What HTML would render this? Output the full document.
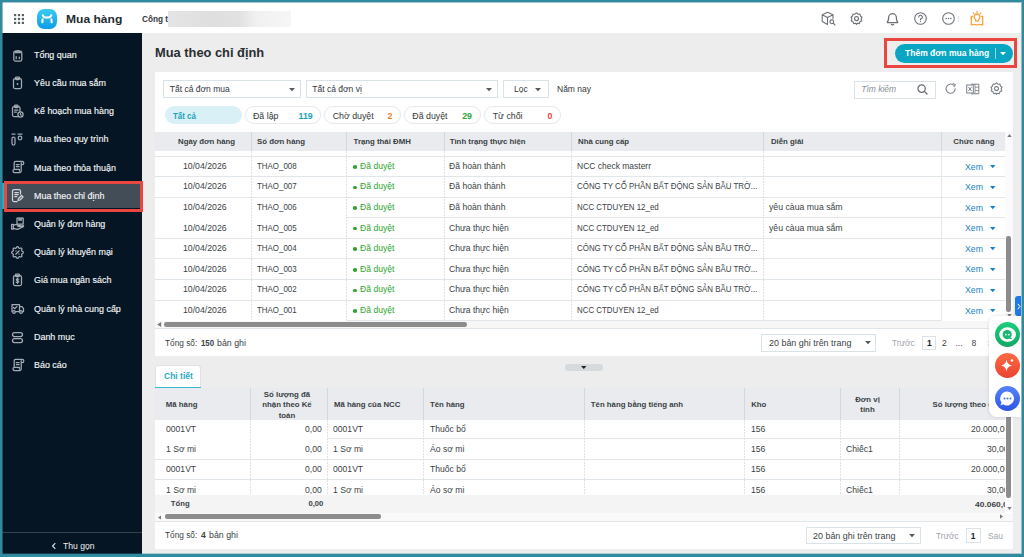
<!DOCTYPE html>
<html><head><meta charset="utf-8">
<style>
*{box-sizing:border-box;margin:0;padding:0}
html,body{width:1024px;height:557px;overflow:hidden}
body{background:#328a9f;font-family:"Liberation Sans",sans-serif;position:relative}
.a{position:absolute}
.t{position:absolute;white-space:nowrap;line-height:1;transform-origin:0 0}
svg{position:absolute;overflow:visible}
</style></head><body>
<div class="a" style="left:2px;top:2px;width:1019px;height:552px;background:#ededed"></div>
<div class="a" style="left:2px;top:2px;width:1019px;height:31px;background:#fff"></div>
<svg style="left:13px;top:13px" width="12" height="12" viewBox="0 0 12 12" fill="#5a5f66">
<rect x="1" y="1" width="2.2" height="2.2"/><rect x="4.9" y="1" width="2.2" height="2.2"/><rect x="8.8" y="1" width="2.2" height="2.2"/>
<rect x="1" y="4.9" width="2.2" height="2.2"/><rect x="4.9" y="4.9" width="2.2" height="2.2"/><rect x="8.8" y="4.9" width="2.2" height="2.2"/>
<rect x="1" y="8.8" width="2.2" height="2.2"/><rect x="4.9" y="8.8" width="2.2" height="2.2"/><rect x="8.8" y="8.8" width="2.2" height="2.2"/></svg>
<svg style="left:37px;top:9px" width="20" height="20" viewBox="0 0 20 20">
<defs><linearGradient id="lg" x1="0" y1="0" x2="0" y2="1"><stop offset="0" stop-color="#3ccbf6"/><stop offset="1" stop-color="#0b9ce6"/></linearGradient></defs>
<rect x="0" y="0" width="20" height="20" rx="7.2" fill="url(#lg)"/>
<path d="M5.8 6.3 C6.3 9.3 13.7 9.3 14.2 6.3" stroke="#fff" stroke-width="2.1" fill="none" stroke-linecap="round"/>
<path d="M5.6 10.4 L5.3 13.3 M14.4 10.4 L14.7 13.3" stroke="#fff" stroke-width="2.1" stroke-linecap="round"/></svg>
<div class="t" style="left:65.60px;top:14.06px;font-size:10.8px;color:#262a2f;font-weight:bold;transform:scaleX(1.1174);">Mua hàng</div>
<div class="t" style="left:142.30px;top:15.07px;font-size:8.9px;color:#33373c;font-weight:bold;transform:scaleX(0.9255);">Công t</div>
<div class="a" style="left:167.5px;top:11px;width:123.5px;height:16px;background:linear-gradient(90deg,#e4e4e4 0%,#dfdfdf 35%,#e1e1e1 58%,#f1f1f1 72%,#f6f6f6 100%)"></div>
<svg style="left:821px;top:11px" width="15" height="15" viewBox="0 0 15 15">
<path d="M6.5 1.2 L12 3.8 V7.5 M6.5 1.2 L1.2 3.8 V10.6 L6.5 13.4 M1.2 3.8 L6.5 6.4 L12 3.8 M6.5 6.4 V13.4" stroke="#6d7279" stroke-width="1.1" fill="none" stroke-linecap="round" stroke-linejoin="round"/>
<circle cx="10.8" cy="10.8" r="1.9" stroke="#6d7279" stroke-width="1.1" fill="none" stroke-linecap="round" stroke-linejoin="round"/><path d="M12.2 12.2 L14 14" stroke="#6d7279" stroke-width="1.1" fill="none" stroke-linecap="round" stroke-linejoin="round"/></svg>
<svg style="left:850px;top:12px" width="13" height="13" viewBox="0 0 13 13">
<path d="M6.5 .9 L8 2.2 L10 2 L10.4 4 L12 5.2 L11.1 7 L11.8 8.9 L10 9.6 L9.4 11.6 L7.4 11.2 L6.5 12.3 L5.6 11.2 L3.6 11.6 L3 9.6 L1.2 8.9 L1.9 7 L1 5.2 L2.6 4 L3 2 L5 2.2 Z" stroke="#6d7279" stroke-width="1.1" fill="none" stroke-linecap="round" stroke-linejoin="round"/>
<circle cx="6.5" cy="6.6" r="2" stroke="#6d7279" stroke-width="1.1" fill="none" stroke-linecap="round" stroke-linejoin="round"/></svg>
<svg style="left:885.5px;top:12px" width="13" height="14" viewBox="0 0 13 14">
<path d="M1.3 10.6 C1.3 9.2 2.6 8.8 2.6 6.6 V5.6 A3.9 3.9 0 0 1 10.4 5.6 V6.6 C10.4 8.8 11.7 9.2 11.7 10.6 Z" stroke="#6b7077" stroke-width="1.3" fill="none" stroke-linejoin="round"/><path d="M5.4 12.4 Q6.5 13.6 7.6 12.4" stroke="#6b7077" stroke-width="1.3" fill="none" stroke-linecap="round"/></svg>
<svg style="left:914px;top:12px" width="13" height="13" viewBox="0 0 13 13">
<circle cx="6.5" cy="6.5" r="5.8" stroke="#6d7279" stroke-width="1.1" fill="none" stroke-linecap="round" stroke-linejoin="round"/><path d="M4.8 5 A1.8 1.8 0 1 1 6.5 6.8 V7.8" stroke="#6d7279" stroke-width="1.1" fill="none" stroke-linecap="round" stroke-linejoin="round"/><circle cx="6.5" cy="9.6" r=".6" fill="#666b72"/></svg>
<svg style="left:942px;top:12px" width="13" height="13" viewBox="0 0 13 13">
<circle cx="6.5" cy="6.5" r="5.8" stroke="#6d7279" stroke-width="1.1" fill="none" stroke-linecap="round" stroke-linejoin="round"/><circle cx="4.2" cy="6.5" r=".75" fill="#666b72"/><circle cx="6.5" cy="6.5" r=".75" fill="#666b72"/><circle cx="8.8" cy="6.5" r=".75" fill="#666b72"/></svg>
<div class="a" style="left:958px;top:16px;width:1px;height:6px;background:#dfe3e6"></div>
<svg style="left:970px;top:10px" width="15" height="16" viewBox="0 0 15 16">
<path d="M2.6 6.4H1.3V15Q4.2 13.7 7 15Q9.8 13.7 12.7 15V6.4H11.4" stroke="#f8a43a" stroke-width="1.3" fill="none" stroke-linecap="round" stroke-linejoin="round"/>
<path d="M5.9 11.2L5.4 9.3A2.9 2.9 0 1 1 8.6 9.3L8.1 11.2Z" stroke="#f8a43a" stroke-width="1.3" fill="none" stroke-linecap="round" stroke-linejoin="round"/><path d="M7 1.3V2.3M3.3 3L3.9 3.6M10.7 3L10.1 3.6" stroke="#f8a43a" stroke-width="1.3" fill="none" stroke-linecap="round" stroke-linejoin="round"/></svg>
<div class="a" style="left:2px;top:33px;width:140px;height:521px;background:#051524"></div>
<div class="a" style="left:2px;top:183px;width:2px;height:26px;background:#1fb5d6"></div>
<div class="a" style="left:4px;top:181px;width:139px;height:31px;border:3px solid #e8463e;background:#051524;box-sizing:border-box"></div>
<div class="a" style="left:7px;top:184px;width:133px;height:24px;background:#434d57"></div>
<div class="a" style="left:2px;top:532px;width:140px;height:1px;background:#36414c"></div>
<svg style="left:51px;top:542px" width="6" height="8" viewBox="0 0 6 8"><path d="M4.3 1.2L1.6 4l2.7 2.8" stroke="#d5d9dd" stroke-width="1.2" fill="none"/></svg>
<div class="t" style="left:62.50px;top:541.71px;font-size:9.2px;color:#eef0f2;transform:scaleX(0.9344);">Thu gọn</div>
<svg style="left:11px;top:48px" width="13" height="15" viewBox="0 0 13 15"><rect x="2.8" y="3.2" width="8" height="9.8" rx="1.5" stroke="#a3abb3" stroke-width="1.25" fill="none" stroke-linecap="round" stroke-linejoin="round"/><path d="M5 3.5 Q6.8 1.8 8.6 3.5 L9.5 4.6 H4.1Z" stroke="#a3abb3" stroke-width="1.25" fill="none" stroke-linecap="round" stroke-linejoin="round"/><path d="M5.2 8.5v2.2M8.3 9v1.7" stroke="#a3abb3" stroke-width="1.25" fill="none" stroke-linecap="round" stroke-linejoin="round"/></svg>
<div class="t" style="left:34.10px;top:49.87px;font-size:9.6px;color:#f4f5f7;transform:scaleX(0.93);-webkit-text-stroke:0.15px #f4f5f7;">Tổng quan</div>
<svg style="left:11px;top:76px" width="13" height="15" viewBox="0 0 13 15"><rect x="2.5" y="2.5" width="8" height="10" rx="1.5" stroke="#a3abb3" stroke-width="1.25" fill="none" stroke-linecap="round" stroke-linejoin="round"/><rect x="4.5" y="1" width="4" height="2.5" rx="0.8" stroke="#a3abb3" stroke-width="1.25" fill="none" stroke-linecap="round" stroke-linejoin="round"/><circle cx="6.5" cy="8" r="0.9" fill="#a3abb3"/></svg>
<div class="t" style="left:34.10px;top:78.07px;font-size:9.6px;color:#f4f5f7;transform:scaleX(0.93);-webkit-text-stroke:0.15px #f4f5f7;">Yêu cầu mua sắm</div>
<svg style="left:11px;top:104px" width="13" height="15" viewBox="0 0 13 15"><rect x="1.5" y="2.5" width="7.5" height="10" rx="1.5" stroke="#a3abb3" stroke-width="1.25" fill="none" stroke-linecap="round" stroke-linejoin="round"/><rect x="3.5" y="1" width="3.5" height="2.5" rx="0.8" stroke="#a3abb3" stroke-width="1.25" fill="none" stroke-linecap="round" stroke-linejoin="round"/><path d="M3.5 6h3.5M3.5 8h2" stroke="#a3abb3" stroke-width="1.25" fill="none" stroke-linecap="round" stroke-linejoin="round"/><circle cx="9.5" cy="10.5" r="2.6" fill="#061421" stroke="#a3abb3" stroke-width="1.25" fill="none" stroke-linecap="round" stroke-linejoin="round"/><path d="M9.5 9.3v1.3l.8.6" stroke="#a3abb3" stroke-width="1.25" fill="none" stroke-linecap="round" stroke-linejoin="round"/></svg>
<div class="t" style="left:34.10px;top:106.27px;font-size:9.6px;color:#f4f5f7;transform:scaleX(0.93);-webkit-text-stroke:0.15px #f4f5f7;">Kế hoạch mua hàng</div>
<svg style="left:11px;top:132px" width="13" height="15" viewBox="0 0 13 15"><rect x="1" y="5" width="3" height="8" rx="1.5" stroke="#a3abb3" stroke-width="1.25" fill="none" stroke-linecap="round" stroke-linejoin="round"/><path d="M1 2h3M7 2h4" stroke="#a3abb3" stroke-width="1.25" fill="none" stroke-linecap="round" stroke-linejoin="round"/><circle cx="9" cy="6" r="1.8" stroke="#a3abb3" stroke-width="1.25" fill="none" stroke-linecap="round" stroke-linejoin="round"/></svg>
<div class="t" style="left:34.10px;top:134.47px;font-size:9.6px;color:#f4f5f7;transform:scaleX(0.93);-webkit-text-stroke:0.15px #f4f5f7;">Mua theo quy trình</div>
<svg style="left:11px;top:160px" width="13" height="15" viewBox="0 0 13 15"><path d="M4.6 1.3H11.2A1.6 1.6 0 0 1 11.2 4.5H10.2M4.6 1.3A1.4 1.4 0 0 0 3.2 2.7V9.4M10.2 2.7V11A1.5 1.5 0 0 1 8.7 12.5H3.6A1.6 1.6 0 0 1 3.6 9.3H8.4V11" stroke="#a3abb3" stroke-width="1.25" fill="none" stroke-linecap="round" stroke-linejoin="round"/><path d="M5.3 4.6H8.1M5.3 6.6H8.1" stroke="#a3abb3" stroke-width="1.25" fill="none" stroke-linecap="round" stroke-linejoin="round"/></svg>
<div class="t" style="left:34.10px;top:162.67px;font-size:9.6px;color:#f4f5f7;transform:scaleX(0.93);-webkit-text-stroke:0.15px #f4f5f7;">Mua theo thỏa thuận</div>
<svg style="left:11px;top:188px" width="13" height="15" viewBox="0 0 13 15"><path d="M9.5 6V3a1.5 1.5 0 0 0-1.5-1.5H3A1.5 1.5 0 0 0 1.5 3v9A1.5 1.5 0 0 0 3 13.5h3" stroke="#d3d7db" stroke-width="1.25" fill="none" stroke-linecap="round" stroke-linejoin="round"/><path d="M3.8 4.5h3.5M3.8 6.5h3.5M3.8 8.5h2" stroke="#d3d7db" stroke-width="1.25" fill="none" stroke-linecap="round" stroke-linejoin="round"/><path d="M7 12.5l.5-2 3-3 1.5 1.5-3 3z" stroke="#d3d7db" stroke-width="1.25" fill="none" stroke-linecap="round" stroke-linejoin="round"/></svg>
<div class="t" style="left:34.10px;top:190.87px;font-size:9.6px;color:#f4f5f7;transform:scaleX(0.93);-webkit-text-stroke:0.15px #f4f5f7;">Mua theo chỉ định</div>
<svg style="left:11px;top:217px" width="13" height="15" viewBox="0 0 13 15"><rect x="6" y="1.2" width="6.2" height="6" stroke="#a3abb3" stroke-width="1.25" fill="none" stroke-linecap="round" stroke-linejoin="round"/><path d="M8 1.2v2.2l1.1-.7 1.1.7V1.2" stroke="#a3abb3" stroke-width="1.25" fill="none" stroke-linecap="round" stroke-linejoin="round"/><rect x="0.6" y="7.4" width="1.8" height="4.6" stroke="#a3abb3" stroke-width="1.25" fill="none" stroke-linecap="round" stroke-linejoin="round"/><path d="M2.4 8.2L4.6 7.6Q6 7.4 7.4 8.4H9.2Q10.2 8.6 9.6 9.4H6.8M2.4 11.4L6.4 12.4L12.4 9.6Q13 8.6 12 8.6L9.6 9.4" stroke="#a3abb3" stroke-width="1.25" fill="none" stroke-linecap="round" stroke-linejoin="round"/></svg>
<div class="t" style="left:34.10px;top:219.07px;font-size:9.6px;color:#f4f5f7;transform:scaleX(0.93);-webkit-text-stroke:0.15px #f4f5f7;">Quản lý đơn hàng</div>
<svg style="left:11px;top:245px" width="13" height="15" viewBox="0 0 13 15"><path d="M12.35 7.50 L12.31 7.73 L12.21 7.95 L12.04 8.16 L11.83 8.34 L11.60 8.51 L11.36 8.67 L11.14 8.81 L10.95 8.94 L10.80 9.09 L10.70 9.24 L10.66 9.42 L10.66 9.62 L10.70 9.85 L10.76 10.11 L10.82 10.39 L10.87 10.67 L10.88 10.96 L10.85 11.22 L10.77 11.45 L10.64 11.64 L10.45 11.77 L10.22 11.85 L9.96 11.88 L9.67 11.87 L9.39 11.82 L9.11 11.76 L8.85 11.70 L8.62 11.66 L8.42 11.66 L8.24 11.70 L8.09 11.80 L7.94 11.95 L7.81 12.14 L7.67 12.36 L7.51 12.60 L7.34 12.83 L7.16 13.04 L6.95 13.21 L6.73 13.31 L6.50 13.35 L6.27 13.31 L6.05 13.21 L5.84 13.04 L5.66 12.83 L5.49 12.60 L5.33 12.36 L5.19 12.14 L5.06 11.95 L4.91 11.80 L4.76 11.70 L4.58 11.66 L4.38 11.66 L4.15 11.70 L3.89 11.76 L3.61 11.82 L3.33 11.87 L3.04 11.88 L2.78 11.85 L2.55 11.77 L2.36 11.64 L2.23 11.45 L2.15 11.22 L2.12 10.96 L2.13 10.67 L2.18 10.39 L2.24 10.11 L2.30 9.85 L2.34 9.62 L2.34 9.42 L2.30 9.24 L2.20 9.09 L2.05 8.94 L1.86 8.81 L1.64 8.67 L1.40 8.51 L1.17 8.34 L0.96 8.16 L0.79 7.95 L0.69 7.73 L0.65 7.50 L0.69 7.27 L0.79 7.05 L0.96 6.84 L1.17 6.66 L1.40 6.49 L1.64 6.33 L1.86 6.19 L2.05 6.06 L2.20 5.91 L2.30 5.76 L2.34 5.58 L2.34 5.38 L2.30 5.15 L2.24 4.89 L2.18 4.61 L2.13 4.33 L2.12 4.04 L2.15 3.78 L2.23 3.55 L2.36 3.36 L2.55 3.23 L2.78 3.15 L3.04 3.12 L3.33 3.13 L3.61 3.18 L3.89 3.24 L4.15 3.30 L4.38 3.34 L4.58 3.34 L4.76 3.30 L4.91 3.20 L5.06 3.05 L5.19 2.86 L5.33 2.64 L5.49 2.40 L5.66 2.17 L5.84 1.96 L6.05 1.79 L6.27 1.69 L6.50 1.65 L6.73 1.69 L6.95 1.79 L7.16 1.96 L7.34 2.17 L7.51 2.40 L7.67 2.64 L7.81 2.86 L7.94 3.05 L8.09 3.20 L8.24 3.30 L8.42 3.34 L8.62 3.34 L8.85 3.30 L9.11 3.24 L9.39 3.18 L9.67 3.13 L9.96 3.12 L10.22 3.15 L10.45 3.23 L10.64 3.36 L10.77 3.55 L10.85 3.78 L10.88 4.04 L10.87 4.33 L10.82 4.61 L10.76 4.89 L10.70 5.15 L10.66 5.38 L10.66 5.58 L10.70 5.76 L10.80 5.91 L10.95 6.06 L11.14 6.19 L11.36 6.33 L11.60 6.49 L11.83 6.66 L12.04 6.84 L12.21 7.05 L12.31 7.27 L12.35 7.50Z" stroke="#a3abb3" stroke-width="1.25" fill="none" stroke-linecap="round" stroke-linejoin="round"/><path d="M4.8 9.2l3.4-3.4" stroke="#a3abb3" stroke-width="1.25" fill="none" stroke-linecap="round" stroke-linejoin="round"/><circle cx="5" cy="6" r=".7" fill="#a3abb3"/><circle cx="8" cy="9" r=".7" fill="#a3abb3"/></svg>
<div class="t" style="left:34.10px;top:247.27px;font-size:9.6px;color:#f4f5f7;transform:scaleX(0.93);-webkit-text-stroke:0.15px #f4f5f7;">Quản lý khuyến mại</div>
<svg style="left:11px;top:273px" width="13" height="15" viewBox="0 0 13 15"><rect x="2.5" y="2.5" width="8" height="10" rx="1.5" stroke="#a3abb3" stroke-width="1.25" fill="none" stroke-linecap="round" stroke-linejoin="round"/><rect x="4.5" y="1" width="4" height="2.5" rx="0.8" stroke="#a3abb3" stroke-width="1.25" fill="none" stroke-linecap="round" stroke-linejoin="round"/><path d="M7.7 6.2c-.3-.5-2.4-.7-2.4.5s2.5.7 2.5 1.9-2.1 1.1-2.6.5M6.5 5.2v5.2" stroke="#a3abb3" stroke-width="1.25" fill="none" stroke-linecap="round" stroke-linejoin="round" stroke-width="0.9"/></svg>
<div class="t" style="left:34.10px;top:275.47px;font-size:9.6px;color:#f4f5f7;transform:scaleX(0.93);-webkit-text-stroke:0.15px #f4f5f7;">Giá mua ngân sách</div>
<svg style="left:11px;top:301px" width="13" height="15" viewBox="0 0 13 15"><path d="M1 3.5h7.5v7H1zM8.5 5.5h2.5l1.5 2v3h-4" stroke="#a3abb3" stroke-width="1.25" fill="none" stroke-linecap="round" stroke-linejoin="round"/><circle cx="3" cy="11" r="1.3" fill="#061421" stroke="#a3abb3" stroke-width="1.25" fill="none" stroke-linecap="round" stroke-linejoin="round"/><circle cx="10" cy="11" r="1.3" fill="#061421" stroke="#a3abb3" stroke-width="1.25" fill="none" stroke-linecap="round" stroke-linejoin="round"/><path d="M2.5 6.5l1.2 1.2 2.3-2.3" stroke="#a3abb3" stroke-width="1.25" fill="none" stroke-linecap="round" stroke-linejoin="round"/></svg>
<div class="t" style="left:34.10px;top:303.67px;font-size:9.6px;color:#f4f5f7;transform:scaleX(0.93);-webkit-text-stroke:0.15px #f4f5f7;">Quản lý nhà cung cấp</div>
<svg style="left:11px;top:330px" width="13" height="15" viewBox="0 0 13 15"><rect x="1.5" y="2.5" width="10" height="4" rx="2" stroke="#a3abb3" stroke-width="1.25" fill="none" stroke-linecap="round" stroke-linejoin="round"/><rect x="1.5" y="8.5" width="10" height="4" rx="2" stroke="#a3abb3" stroke-width="1.25" fill="none" stroke-linecap="round" stroke-linejoin="round"/></svg>
<div class="t" style="left:34.10px;top:331.87px;font-size:9.6px;color:#f4f5f7;transform:scaleX(0.93);-webkit-text-stroke:0.15px #f4f5f7;">Danh mục</div>
<svg style="left:11px;top:358px" width="13" height="15" viewBox="0 0 13 15"><path d="M4.6 1.3H11.2A1.6 1.6 0 0 1 11.2 4.5H10.2M4.6 1.3A1.4 1.4 0 0 0 3.2 2.7V9.4M10.2 2.7V11A1.5 1.5 0 0 1 8.7 12.5H3.6A1.6 1.6 0 0 1 3.6 9.3H8.4V11" stroke="#a3abb3" stroke-width="1.25" fill="none" stroke-linecap="round" stroke-linejoin="round"/><path d="M5.3 4.6H8.1M5.3 6.6H8.1" stroke="#a3abb3" stroke-width="1.25" fill="none" stroke-linecap="round" stroke-linejoin="round"/></svg>
<div class="t" style="left:34.10px;top:360.07px;font-size:9.6px;color:#f4f5f7;transform:scaleX(0.93);-webkit-text-stroke:0.15px #f4f5f7;">Báo cáo</div>
<div class="t" style="left:155.10px;top:46.33px;font-size:13.2px;color:#2a2d31;font-weight:bold;transform:scaleX(0.9742);">Mua theo chỉ định</div>
<div class="a" style="left:884px;top:38px;width:133px;height:30px;border:3px solid #e8463e;box-sizing:border-box"></div>
<div class="a" style="left:895px;top:44px;width:118px;height:19px;background:#08a6c3;border-radius:9.5px"></div>
<div class="t" style="left:904.60px;top:48.37px;font-size:9.6px;color:#ffffff;font-weight:bold;transform:scaleX(0.8885);">Thêm đơn mua hàng</div>
<div class="a" style="left:994.5px;top:47.5px;width:1px;height:11px;background:#8fd6e3"></div>
<svg style="left:999.5px;top:52px" width="6" height="4" viewBox="0 0 6 4"><path d="M0 0H6L3 3.2Z" fill="#fff"/></svg>
<div class="a" style="left:155px;top:72px;width:858px;height:284px;background:#fff"></div>
<div class="a" style="left:163px;top:80px;width:138px;height:18px;border:1px solid #d9e2e6;background:#fff;box-sizing:border-box"></div>
<div class="t" style="left:169.80px;top:84.90px;font-size:8.5px;color:#33373c;">Tất cả đơn mua</div>
<svg style="left:288.5px;top:87.6px" width="6" height="4" viewBox="0 0 6 4"><path d="M0 0H6L3 3.3Z" fill="#555a60"/></svg>
<div class="a" style="left:305.5px;top:80px;width:192px;height:18px;border:1px solid #d9e2e6;background:#fff;box-sizing:border-box"></div>
<div class="t" style="left:312.30px;top:84.90px;font-size:8.5px;color:#33373c;">Tất cả đơn vị</div>
<svg style="left:485.5px;top:87.6px" width="6" height="4" viewBox="0 0 6 4"><path d="M0 0H6L3 3.3Z" fill="#555a60"/></svg>
<div class="a" style="left:503px;top:80px;width:46px;height:18px;border:1px solid #d9e2e6;background:#fff;box-sizing:border-box"></div>
<div class="t" style="left:509.80px;top:84.90px;font-size:8.5px;color:#33373c;"></div>
<svg style="left:534.5px;top:87.6px" width="6" height="4" viewBox="0 0 6 4"><path d="M0 0H6L3 3.3Z" fill="#555a60"/></svg>
<div class="t" style="left:514.00px;top:84.90px;font-size:8.5px;color:#33373c;">Lọc</div>
<div class="t" style="left:557.00px;top:84.90px;font-size:8.5px;color:#33373c;">Năm nay</div>
<div class="a" style="left:854px;top:80.5px;width:82px;height:18px;border:1px solid #d9e2e6;background:#fff;box-sizing:border-box"></div>
<div class="t" style="left:861.20px;top:85.10px;font-size:8.5px;color:#8a8f96;font-style:italic;">Tìm kiếm</div>
<svg style="left:917px;top:84px" width="11" height="11" viewBox="0 0 11 11"><circle cx="4.6" cy="4.6" r="3.7" stroke="#666b72" stroke-width="1.2" fill="none"/><path d="M7.4 7.4L10 10" stroke="#666b72" stroke-width="1.3" stroke-linecap="round"/></svg>
<svg style="left:944.5px;top:82.5px" width="12" height="12" viewBox="0 0 12 12"><path d="M10.2 5.5 A4.6 4.6 0 1 1 8.6 2.2" stroke="#80858c" stroke-width="1.05" fill="none" stroke-linecap="round"/><path d="M8.3 .6 L10.4 1.6 L9 3.6" stroke="#80858c" stroke-width="1.05" fill="none" stroke-linecap="round" stroke-linejoin="round"/></svg>
<svg style="left:965.5px;top:82.5px" width="14" height="12" viewBox="0 0 14 12"><path d="M5 1.2 H12.8 V10.8 H5" stroke="#7b8087" stroke-width="1" fill="none"/><path d="M9 1.2V10.8M9 4.2H12.8M9 7.5H12.8" stroke="#7b8087" stroke-width=".8"/><rect x=".7" y="2" width="6.6" height="8" fill="#fff" stroke="#7b8087" stroke-width="1"/><path d="M2.4 4 L5.6 8 M5.6 4 L2.4 8" stroke="#7b8087" stroke-width="1"/></svg>
<svg style="left:989.5px;top:82px" width="13" height="13" viewBox="0 0 13 13">
<path d="M6.5 .9 L8 2.2 L10 2 L10.4 4 L12 5.2 L11.1 7 L11.8 8.9 L10 9.6 L9.4 11.6 L7.4 11.2 L6.5 12.3 L5.6 11.2 L3.6 11.6 L3 9.6 L1.2 8.9 L1.9 7 L1 5.2 L2.6 4 L3 2 L5 2.2 Z" stroke="#7b8087" stroke-width="1.1" fill="none" stroke-linejoin="round"/>
<circle cx="6.5" cy="6.6" r="2" stroke="#7b8087" stroke-width="1.1" fill="none"/></svg>
<div class="a" style="left:165.3px;top:105.8px;width:77px;height:18.3px;background:#d9f1f6;border-radius:9px"></div>
<div class="t" style="left:173.30px;top:111.65px;font-size:8.8px;color:#1c9fbd;font-weight:bold;transform:scaleX(0.9007);">Tất cả</div>
<div class="a" style="left:244.7px;top:105.8px;width:76.5px;height:18.3px;border:1px solid #e4e9ed;border-radius:9.2px;background:#fff;box-sizing:border-box"></div>
<div class="t" style="left:253.00px;top:111.65px;font-size:8.8px;color:#33373c;">Đã lập</div>
<div class="t" style="left:298.51px;top:111.65px;font-size:8.8px;color:#1c9fbd;font-weight:bold;">119</div>
<div class="a" style="left:324.4px;top:105.8px;width:76.5px;height:18.3px;border:1px solid #e4e9ed;border-radius:9.2px;background:#fff;box-sizing:border-box"></div>
<div class="t" style="left:332.70px;top:111.65px;font-size:8.8px;color:#33373c;">Chờ duyệt</div>
<div class="t" style="left:387.51px;top:111.65px;font-size:8.8px;color:#f0802a;font-weight:bold;">2</div>
<div class="a" style="left:404px;top:105.8px;width:76.5px;height:18.3px;border:1px solid #e4e9ed;border-radius:9.2px;background:#fff;box-sizing:border-box"></div>
<div class="t" style="left:412.30px;top:111.65px;font-size:8.8px;color:#33373c;">Đã duyệt</div>
<div class="t" style="left:462.22px;top:111.65px;font-size:8.8px;color:#33a532;font-weight:bold;">29</div>
<div class="a" style="left:484.4px;top:105.8px;width:76.5px;height:18.3px;border:1px solid #e4e9ed;border-radius:9.2px;background:#fff;box-sizing:border-box"></div>
<div class="t" style="left:492.70px;top:111.65px;font-size:8.8px;color:#33373c;">Từ chối</div>
<div class="t" style="left:547.51px;top:111.65px;font-size:8.8px;color:#e8453c;font-weight:bold;">0</div>
<div class="a" style="left:155px;top:131.5px;width:850px;height:19.2px;background:#e9ebee"></div>
<div class="a" style="left:250.5px;top:131.5px;width:1px;height:19.2px;background:#d3d8dd"></div>
<div class="a" style="left:346.3px;top:131.5px;width:1px;height:19.2px;background:#d3d8dd"></div>
<div class="a" style="left:443.5px;top:131.5px;width:1px;height:19.2px;background:#d3d8dd"></div>
<div class="a" style="left:571.1px;top:131.5px;width:1px;height:19.2px;background:#d3d8dd"></div>
<div class="a" style="left:763.2px;top:131.5px;width:1px;height:19.2px;background:#d3d8dd"></div>
<div class="a" style="left:941px;top:131.5px;width:1px;height:19.2px;background:#d3d8dd"></div>
<div class="t" style="left:178.00px;top:137.70px;font-size:7.8px;color:#3a3f45;font-weight:bold;">Ngày đơn hàng</div>
<div class="t" style="left:257.00px;top:137.70px;font-size:7.8px;color:#3a3f45;font-weight:bold;">Số đơn hàng</div>
<div class="t" style="left:353.60px;top:137.70px;font-size:7.8px;color:#3a3f45;font-weight:bold;">Trạng thái ĐMH</div>
<div class="t" style="left:449.70px;top:137.70px;font-size:7.8px;color:#3a3f45;font-weight:bold;">Tình trạng thực hiện</div>
<div class="t" style="left:578.00px;top:137.70px;font-size:7.8px;color:#3a3f45;font-weight:bold;">Nhà cung cấp</div>
<div class="t" style="left:770.90px;top:137.70px;font-size:7.8px;color:#3a3f45;font-weight:bold;">Diễn giải</div>
<div class="t" style="left:953.33px;top:137.70px;font-size:7.8px;color:#3a3f45;font-weight:bold;">Chức năng</div>
<div class="a" style="left:155px;top:155.6px;width:850px;height:1px;background:#e1e6ea"></div>
<div class="a" style="left:155px;top:176.2px;width:850px;height:1px;background:#e1e6ea"></div>
<div class="a" style="left:155px;top:196.6px;width:850px;height:1px;background:#e1e6ea"></div>
<div class="a" style="left:155px;top:238.3px;width:850px;height:1px;background:#e1e6ea"></div>
<div class="a" style="left:155px;top:258.3px;width:850px;height:1px;background:#e1e6ea"></div>
<div class="a" style="left:155px;top:279.2px;width:850px;height:1px;background:#e1e6ea"></div>
<div class="a" style="left:155px;top:300.2px;width:850px;height:1px;background:#e1e6ea"></div>
<div class="a" style="left:346px;top:320px;width:595px;height:1px;background:#e1e6ea"></div>
<div class="a" style="left:155px;top:327.8px;width:858px;height:1px;background:#e1e6ea"></div>
<div class="a" style="left:346px;top:217.4px;width:659px;height:1px;background:#e1e6ea"></div>
<div class="a" style="left:941px;top:151px;width:1px;height:170px;background:#e3e7ea"></div>
<div class="a" style="left:250.5px;top:151px;width:1px;height:169px;background:repeating-linear-gradient(180deg,#dfe3e7 0 2px,transparent 2px 3px)"></div>
<div class="a" style="left:346.3px;top:151px;width:1px;height:169px;background:repeating-linear-gradient(180deg,#dfe3e7 0 2px,transparent 2px 3px)"></div>
<div class="a" style="left:443.5px;top:151px;width:1px;height:169px;background:repeating-linear-gradient(180deg,#dfe3e7 0 2px,transparent 2px 3px)"></div>
<div class="a" style="left:571.1px;top:151px;width:1px;height:169px;background:repeating-linear-gradient(180deg,#dfe3e7 0 2px,transparent 2px 3px)"></div>
<div class="a" style="left:763.2px;top:151px;width:1px;height:169px;background:repeating-linear-gradient(180deg,#dfe3e7 0 2px,transparent 2px 3px)"></div>
<div class="t" style="left:183.30px;top:161.93px;font-size:9.3px;color:#3a3f45;transform:scaleX(0.9370);">10/04/2026</div>
<div class="t" style="left:256.70px;top:161.93px;font-size:9.3px;color:#3a3f45;transform:scaleX(0.8536);">THAO_008</div>
<div class="a" style="left:353px;top:165.20000000000002px;width:3.6px;height:3.6px;background:#2ea52e;border-radius:50%"></div>
<div class="t" style="left:360.40px;top:161.93px;font-size:9.3px;color:#2ea52e;transform:scaleX(0.9250);">Đã duyệt</div>
<div class="t" style="left:449.00px;top:161.93px;font-size:9.3px;color:#3a3f45;transform:scaleX(0.9250);">Đã hoàn thành</div>
<div class="t" style="left:576.80px;top:161.93px;font-size:9.3px;color:#3a3f45;transform:scaleX(0.9124);">NCC check masterr</div>
<div class="t" style="left:965.00px;top:162.73px;font-size:9.3px;color:#1b82c5;transform:scaleX(0.9416);">Xem</div>
<svg style="left:989.5px;top:165.2px" width="6" height="4" viewBox="0 0 6 4"><path d="M0 0H5.5L2.75 3.2Z" fill="#1b82c5"/></svg>
<div class="t" style="left:183.30px;top:182.48px;font-size:9.3px;color:#3a3f45;transform:scaleX(0.9370);">10/04/2026</div>
<div class="t" style="left:256.70px;top:182.48px;font-size:9.3px;color:#3a3f45;transform:scaleX(0.8536);">THAO_007</div>
<div class="a" style="left:353px;top:185.75000000000003px;width:3.6px;height:3.6px;background:#2ea52e;border-radius:50%"></div>
<div class="t" style="left:360.40px;top:182.48px;font-size:9.3px;color:#2ea52e;transform:scaleX(0.9250);">Đã duyệt</div>
<div class="t" style="left:449.00px;top:182.48px;font-size:9.3px;color:#3a3f45;transform:scaleX(0.9250);">Đã hoàn thành</div>
<div class="t" style="left:576.80px;top:182.48px;font-size:9.3px;color:#3a3f45;transform:scaleX(0.8517);">CÔNG TY CỔ PHẦN BẤT ĐỘNG SẢN BẦU TRỜ...</div>
<div class="t" style="left:965.00px;top:183.28px;font-size:9.3px;color:#1b82c5;transform:scaleX(0.9416);">Xem</div>
<svg style="left:989.5px;top:185.8px" width="6" height="4" viewBox="0 0 6 4"><path d="M0 0H5.5L2.75 3.2Z" fill="#1b82c5"/></svg>
<div class="t" style="left:183.30px;top:203.03px;font-size:9.3px;color:#3a3f45;transform:scaleX(0.9370);">10/04/2026</div>
<div class="t" style="left:256.70px;top:203.03px;font-size:9.3px;color:#3a3f45;transform:scaleX(0.8536);">THAO_006</div>
<div class="a" style="left:353px;top:206.3px;width:3.6px;height:3.6px;background:#2ea52e;border-radius:50%"></div>
<div class="t" style="left:360.40px;top:203.03px;font-size:9.3px;color:#2ea52e;transform:scaleX(0.9250);">Đã duyệt</div>
<div class="t" style="left:449.00px;top:203.03px;font-size:9.3px;color:#3a3f45;transform:scaleX(0.9250);">Đã hoàn thành</div>
<div class="t" style="left:576.80px;top:203.03px;font-size:9.3px;color:#3a3f45;transform:scaleX(0.8502);">NCC CTDUYEN 12_ed</div>
<div class="t" style="left:768.70px;top:203.03px;font-size:9.3px;color:#3a3f45;transform:scaleX(0.9370);">yêu càua mua sắm</div>
<div class="t" style="left:965.00px;top:203.83px;font-size:9.3px;color:#1b82c5;transform:scaleX(0.9416);">Xem</div>
<svg style="left:989.5px;top:206.3px" width="6" height="4" viewBox="0 0 6 4"><path d="M0 0H5.5L2.75 3.2Z" fill="#1b82c5"/></svg>
<div class="t" style="left:183.30px;top:223.58px;font-size:9.3px;color:#3a3f45;transform:scaleX(0.9370);">10/04/2026</div>
<div class="t" style="left:256.70px;top:223.58px;font-size:9.3px;color:#3a3f45;transform:scaleX(0.8536);">THAO_005</div>
<div class="a" style="left:353px;top:226.85000000000002px;width:3.6px;height:3.6px;background:#2ea52e;border-radius:50%"></div>
<div class="t" style="left:360.40px;top:223.58px;font-size:9.3px;color:#2ea52e;transform:scaleX(0.9250);">Đã duyệt</div>
<div class="t" style="left:449.00px;top:223.58px;font-size:9.3px;color:#3a3f45;transform:scaleX(0.9250);">Chưa thực hiện</div>
<div class="t" style="left:576.80px;top:223.58px;font-size:9.3px;color:#3a3f45;transform:scaleX(0.8502);">NCC CTDUYEN 12_ed</div>
<div class="t" style="left:768.70px;top:223.58px;font-size:9.3px;color:#3a3f45;transform:scaleX(0.9370);">yêu càua mua sắm</div>
<div class="t" style="left:965.00px;top:224.38px;font-size:9.3px;color:#1b82c5;transform:scaleX(0.9416);">Xem</div>
<svg style="left:989.5px;top:226.9px" width="6" height="4" viewBox="0 0 6 4"><path d="M0 0H5.5L2.75 3.2Z" fill="#1b82c5"/></svg>
<div class="t" style="left:183.30px;top:244.13px;font-size:9.3px;color:#3a3f45;transform:scaleX(0.9370);">10/04/2026</div>
<div class="t" style="left:256.70px;top:244.13px;font-size:9.3px;color:#3a3f45;transform:scaleX(0.8536);">THAO_004</div>
<div class="a" style="left:353px;top:247.4px;width:3.6px;height:3.6px;background:#2ea52e;border-radius:50%"></div>
<div class="t" style="left:360.40px;top:244.13px;font-size:9.3px;color:#2ea52e;transform:scaleX(0.9250);">Đã duyệt</div>
<div class="t" style="left:449.00px;top:244.13px;font-size:9.3px;color:#3a3f45;transform:scaleX(0.9250);">Chưa thực hiện</div>
<div class="t" style="left:576.80px;top:244.13px;font-size:9.3px;color:#3a3f45;transform:scaleX(0.8517);">CÔNG TY CỔ PHẦN BẤT ĐỘNG SẢN BẦU TRỜ...</div>
<div class="t" style="left:965.00px;top:244.93px;font-size:9.3px;color:#1b82c5;transform:scaleX(0.9416);">Xem</div>
<svg style="left:989.5px;top:247.4px" width="6" height="4" viewBox="0 0 6 4"><path d="M0 0H5.5L2.75 3.2Z" fill="#1b82c5"/></svg>
<div class="t" style="left:183.30px;top:264.68px;font-size:9.3px;color:#3a3f45;transform:scaleX(0.9370);">10/04/2026</div>
<div class="t" style="left:256.70px;top:264.68px;font-size:9.3px;color:#3a3f45;transform:scaleX(0.8536);">THAO_003</div>
<div class="a" style="left:353px;top:267.95px;width:3.6px;height:3.6px;background:#2ea52e;border-radius:50%"></div>
<div class="t" style="left:360.40px;top:264.68px;font-size:9.3px;color:#2ea52e;transform:scaleX(0.9250);">Đã duyệt</div>
<div class="t" style="left:449.00px;top:264.68px;font-size:9.3px;color:#3a3f45;transform:scaleX(0.9250);">Chưa thực hiện</div>
<div class="t" style="left:576.80px;top:264.68px;font-size:9.3px;color:#3a3f45;transform:scaleX(0.8517);">CÔNG TY CỔ PHẦN BẤT ĐỘNG SẢN BẦU TRỜ...</div>
<div class="t" style="left:965.00px;top:265.48px;font-size:9.3px;color:#1b82c5;transform:scaleX(0.9416);">Xem</div>
<svg style="left:989.5px;top:267.9px" width="6" height="4" viewBox="0 0 6 4"><path d="M0 0H5.5L2.75 3.2Z" fill="#1b82c5"/></svg>
<div class="t" style="left:183.30px;top:285.23px;font-size:9.3px;color:#3a3f45;transform:scaleX(0.9370);">10/04/2026</div>
<div class="t" style="left:256.70px;top:285.23px;font-size:9.3px;color:#3a3f45;transform:scaleX(0.8536);">THAO_002</div>
<div class="a" style="left:353px;top:288.5px;width:3.6px;height:3.6px;background:#2ea52e;border-radius:50%"></div>
<div class="t" style="left:360.40px;top:285.23px;font-size:9.3px;color:#2ea52e;transform:scaleX(0.9250);">Đã duyệt</div>
<div class="t" style="left:449.00px;top:285.23px;font-size:9.3px;color:#3a3f45;transform:scaleX(0.9250);">Chưa thực hiện</div>
<div class="t" style="left:576.80px;top:285.23px;font-size:9.3px;color:#3a3f45;transform:scaleX(0.8517);">CÔNG TY CỔ PHẦN BẤT ĐỘNG SẢN BẦU TRỜ...</div>
<div class="t" style="left:965.00px;top:286.03px;font-size:9.3px;color:#1b82c5;transform:scaleX(0.9416);">Xem</div>
<svg style="left:989.5px;top:288.5px" width="6" height="4" viewBox="0 0 6 4"><path d="M0 0H5.5L2.75 3.2Z" fill="#1b82c5"/></svg>
<div class="t" style="left:183.30px;top:305.78px;font-size:9.3px;color:#3a3f45;transform:scaleX(0.9370);">10/04/2026</div>
<div class="t" style="left:256.70px;top:305.78px;font-size:9.3px;color:#3a3f45;transform:scaleX(0.8536);">THAO_001</div>
<div class="a" style="left:353px;top:309.04999999999995px;width:3.6px;height:3.6px;background:#2ea52e;border-radius:50%"></div>
<div class="t" style="left:360.40px;top:305.78px;font-size:9.3px;color:#2ea52e;transform:scaleX(0.9250);">Đã duyệt</div>
<div class="t" style="left:449.00px;top:305.78px;font-size:9.3px;color:#3a3f45;transform:scaleX(0.9250);">Chưa thực hiện</div>
<div class="t" style="left:576.80px;top:305.78px;font-size:9.3px;color:#3a3f45;transform:scaleX(0.8502);">NCC CTDUYEN 12_ed</div>
<div class="t" style="left:965.00px;top:306.58px;font-size:9.3px;color:#1b82c5;transform:scaleX(0.9416);">Xem</div>
<svg style="left:989.5px;top:309.0px" width="6" height="4" viewBox="0 0 6 4"><path d="M0 0H5.5L2.75 3.2Z" fill="#1b82c5"/></svg>
<div class="a" style="left:155px;top:321px;width:850px;height:6.8px;background:#f7f7f7"></div>
<svg style="left:156.8px;top:321.8px" width="5" height="5" viewBox="0 0 5 5"><path d="M4.2 0V5L0.2 2.5Z" fill="#777"/></svg>
<div class="a" style="left:164.4px;top:322px;width:302.6px;height:4.6px;background:#8c8c8c;border-radius:2.3px"></div>
<div class="a" style="left:1005px;top:131px;width:8px;height:190px;background:#fafafa"></div>
<svg style="left:1006.5px;top:133px" width="5" height="5" viewBox="0 0 5 5"><path d="M0.3 4H4.7L2.5 1Z" fill="#7a7a7a"/></svg>
<div class="a" style="left:1006.3px;top:236px;width:4.4px;height:75.6px;background:#8c8c8c;border-radius:2.2px"></div>
<svg style="left:1006.5px;top:313px" width="5" height="5" viewBox="0 0 5 5"><path d="M0.3 1H4.7L2.5 4Z" fill="#7a7a7a"/></svg>
<div class="t" style="left:165.40px;top:338.60px;font-size:8.5px;color:#3a3f45;transform:scaleX(0.9736);">Tổng số:</div>
<div class="t" style="left:200.80px;top:338.60px;font-size:8.5px;color:#3a3f45;font-weight:bold;transform:scaleX(0.9237);">150</div>
<div class="t" style="left:217.10px;top:338.60px;font-size:8.5px;color:#3a3f45;transform:scaleX(1.0399);">bản ghi</div>
<div class="a" style="left:761.4px;top:334.4px;width:115px;height:17.2px;border:1px solid #d9e2e6;background:#fff;box-sizing:border-box"></div>
<div class="t" style="left:768.60px;top:339.10px;font-size:8.5px;color:#3a3f45;transform:scaleX(1.0504);">20 bản ghi trên trang</div>
<svg style="left:864.5px;top:341px" width="6" height="4" viewBox="0 0 6 4"><path d="M0 0H6L3 3.3Z" fill="#555a60"/></svg>
<div class="t" style="left:892.00px;top:339.10px;font-size:8.5px;color:#a0a5ab;transform:scaleX(0.9775);">Trước</div>
<div class="a" style="left:922.2px;top:335.8px;width:14.1px;height:14.7px;border:1px solid #d9e2e6;background:#fff;box-sizing:border-box"></div>
<div class="t" style="left:926.89px;top:339.10px;font-size:8.5px;color:#222;font-weight:bold;">1</div>
<div class="t" style="left:942.00px;top:339.10px;font-size:8.5px;color:#3a3f45;">2</div>
<div class="t" style="left:955.50px;top:339.10px;font-size:8.5px;color:#3a3f45;">...</div>
<div class="t" style="left:971.50px;top:339.10px;font-size:8.5px;color:#3a3f45;">8</div>
<div class="t" style="left:988.00px;top:339.10px;font-size:8.5px;color:#a0a5ab;">Sau</div>
<div class="a" style="left:564.5px;top:363.6px;width:38.5px;height:7.7px;background:#d6dadd;border-radius:3px"></div>
<svg style="left:580.5px;top:366px" width="6" height="4" viewBox="0 0 6 4"><path d="M0 0H5.5L2.75 3Z" fill="#222"/></svg>
<div class="a" style="left:155px;top:364.8px;width:45.6px;height:23px;background:#fff;border:1px solid #dde2e5;border-bottom:none;border-radius:3px 3px 0 0;box-sizing:border-box"></div>
<div class="a" style="left:155px;top:386.6px;width:45.6px;height:1.4px;background:#3ab6d2"></div>
<div class="t" style="left:163.60px;top:371.65px;font-size:8.8px;color:#2aaac8;font-weight:bold;transform:scaleX(0.9695);">Chi tiết</div>
<div class="a" style="left:155px;top:388px;width:858px;height:161.3px;background:#fff"></div>
<div class="a" style="left:155px;top:388px;width:850px;height:31.5px;background:#e9ebee"></div>
<div class="a" style="left:250.2px;top:388px;width:1px;height:31.5px;background:#d3d8dd"></div>
<div class="a" style="left:327.2px;top:388px;width:1px;height:31.5px;background:#d3d8dd"></div>
<div class="a" style="left:423.3px;top:388px;width:1px;height:31.5px;background:#d3d8dd"></div>
<div class="a" style="left:584px;top:388px;width:1px;height:31.5px;background:#d3d8dd"></div>
<div class="a" style="left:744.4px;top:388px;width:1px;height:31.5px;background:#d3d8dd"></div>
<div class="a" style="left:840.3px;top:388px;width:1px;height:31.5px;background:#d3d8dd"></div>
<div class="a" style="left:898.5px;top:388px;width:1px;height:31.5px;background:#d3d8dd"></div>
<div class="t" style="left:165.80px;top:401.40px;font-size:7.8px;color:#3a3f45;font-weight:bold;">Mã hàng</div>
<div class="t" style="left:263.86px;top:391.00px;font-size:7.8px;color:#3a3f45;font-weight:bold;">Số lượng đã</div>
<div class="t" style="left:262.31px;top:401.40px;font-size:7.8px;color:#3a3f45;font-weight:bold;">nhận theo Kế</div>
<div class="t" style="left:278.77px;top:411.70px;font-size:7.8px;color:#3a3f45;font-weight:bold;">toán</div>
<div class="t" style="left:334.00px;top:401.40px;font-size:7.8px;color:#3a3f45;font-weight:bold;">Mã hàng của NCC</div>
<div class="t" style="left:429.90px;top:401.40px;font-size:7.8px;color:#3a3f45;font-weight:bold;">Tên hàng</div>
<div class="t" style="left:590.80px;top:401.40px;font-size:7.8px;color:#3a3f45;font-weight:bold;">Tên hàng bằng tiếng anh</div>
<div class="t" style="left:751.20px;top:401.40px;font-size:7.8px;color:#3a3f45;font-weight:bold;">Kho</div>
<div class="t" style="left:855.20px;top:395.90px;font-size:7.8px;color:#3a3f45;font-weight:bold;">Đơn vị</div>
<div class="t" style="left:860.36px;top:405.90px;font-size:7.8px;color:#3a3f45;font-weight:bold;">tính</div>
<div class="t" style="left:932.50px;top:401.40px;font-size:7.8px;color:#3a3f45;font-weight:bold;">Số lượng theo đ</div>
<div class="a" style="left:327px;top:438.4px;width:678px;height:1px;background:#e1e6ea"></div>
<div class="a" style="left:155px;top:458.8px;width:850px;height:1px;background:#e1e6ea"></div>
<div class="a" style="left:155px;top:479.2px;width:850px;height:1px;background:#e1e6ea"></div>
<div class="a" style="left:250.2px;top:419.5px;width:1px;height:76px;background:repeating-linear-gradient(180deg,#dfe3e7 0 2px,transparent 2px 3px)"></div>
<div class="a" style="left:327.2px;top:419.5px;width:1px;height:76px;background:repeating-linear-gradient(180deg,#dfe3e7 0 2px,transparent 2px 3px)"></div>
<div class="a" style="left:423.3px;top:419.5px;width:1px;height:76px;background:repeating-linear-gradient(180deg,#dfe3e7 0 2px,transparent 2px 3px)"></div>
<div class="a" style="left:584px;top:419.5px;width:1px;height:76px;background:repeating-linear-gradient(180deg,#dfe3e7 0 2px,transparent 2px 3px)"></div>
<div class="a" style="left:744.4px;top:419.5px;width:1px;height:76px;background:repeating-linear-gradient(180deg,#dfe3e7 0 2px,transparent 2px 3px)"></div>
<div class="a" style="left:840.3px;top:419.5px;width:1px;height:76px;background:repeating-linear-gradient(180deg,#dfe3e7 0 2px,transparent 2px 3px)"></div>
<div class="a" style="left:898.5px;top:419.5px;width:1px;height:76px;background:repeating-linear-gradient(180deg,#dfe3e7 0 2px,transparent 2px 3px)"></div>
<div class="a" style="left:0;top:0;width:1005px;height:557px;overflow:hidden">
<div class="t" style="left:165.50px;top:424.63px;font-size:9.3px;color:#3a3f45;transform:scaleX(0.9250);">0001VT</div>
<div class="t" style="left:304.86px;top:424.63px;font-size:9.3px;color:#3a3f45;transform:scaleX(0.9250);">0,00</div>
<div class="t" style="left:333.20px;top:424.63px;font-size:9.3px;color:#3a3f45;transform:scaleX(0.9250);">0001VT</div>
<div class="t" style="left:429.90px;top:424.63px;font-size:9.3px;color:#3a3f45;transform:scaleX(0.9250);">Thuốc bổ</div>
<div class="t" style="left:751.20px;top:424.63px;font-size:9.3px;color:#3a3f45;transform:scaleX(0.9250);">156</div>
<div class="t" style="left:970.74px;top:424.63px;font-size:9.3px;color:#3a3f45;transform:scaleX(0.9250);">20.000,00</div>
<div class="t" style="left:165.50px;top:444.93px;font-size:9.3px;color:#3a3f45;transform:scaleX(0.9250);">1 Sơ mi</div>
<div class="t" style="left:304.86px;top:444.93px;font-size:9.3px;color:#3a3f45;transform:scaleX(0.9250);">0,00</div>
<div class="t" style="left:333.20px;top:444.93px;font-size:9.3px;color:#3a3f45;transform:scaleX(0.9250);">1 Sơ mi</div>
<div class="t" style="left:429.90px;top:444.93px;font-size:9.3px;color:#3a3f45;transform:scaleX(0.9250);">Áo sơ mi</div>
<div class="t" style="left:751.20px;top:444.93px;font-size:9.3px;color:#3a3f45;transform:scaleX(0.9250);">156</div>
<div class="t" style="left:846.40px;top:444.93px;font-size:9.3px;color:#3a3f45;transform:scaleX(0.9250);">Chiếc1</div>
<div class="t" style="left:987.48px;top:444.93px;font-size:9.3px;color:#3a3f45;transform:scaleX(0.9250);">30,00</div>
<div class="t" style="left:165.50px;top:465.23px;font-size:9.3px;color:#3a3f45;transform:scaleX(0.9250);">0001VT</div>
<div class="t" style="left:304.86px;top:465.23px;font-size:9.3px;color:#3a3f45;transform:scaleX(0.9250);">0,00</div>
<div class="t" style="left:333.20px;top:465.23px;font-size:9.3px;color:#3a3f45;transform:scaleX(0.9250);">0001VT</div>
<div class="t" style="left:429.90px;top:465.23px;font-size:9.3px;color:#3a3f45;transform:scaleX(0.9250);">Thuốc bổ</div>
<div class="t" style="left:751.20px;top:465.23px;font-size:9.3px;color:#3a3f45;transform:scaleX(0.9250);">156</div>
<div class="t" style="left:970.74px;top:465.23px;font-size:9.3px;color:#3a3f45;transform:scaleX(0.9250);">20.000,00</div>
<div class="t" style="left:165.50px;top:485.53px;font-size:9.3px;color:#3a3f45;transform:scaleX(0.9250);">1 Sơ mi</div>
<div class="t" style="left:304.86px;top:485.53px;font-size:9.3px;color:#3a3f45;transform:scaleX(0.9250);">0,00</div>
<div class="t" style="left:333.20px;top:485.53px;font-size:9.3px;color:#3a3f45;transform:scaleX(0.9250);">1 Sơ mi</div>
<div class="t" style="left:429.90px;top:485.53px;font-size:9.3px;color:#3a3f45;transform:scaleX(0.9250);">Áo sơ mi</div>
<div class="t" style="left:751.20px;top:485.53px;font-size:9.3px;color:#3a3f45;transform:scaleX(0.9250);">156</div>
<div class="t" style="left:846.40px;top:485.53px;font-size:9.3px;color:#3a3f45;transform:scaleX(0.9250);">Chiếc1</div>
<div class="t" style="left:987.48px;top:485.53px;font-size:9.3px;color:#3a3f45;transform:scaleX(0.9250);">30,00</div>
<div class="a" style="left:155px;top:495.3px;width:850px;height:17.6px;background:#f4f4f4"></div>
<div class="t" style="left:170.80px;top:500.18px;font-size:7.7px;color:#3a3f45;font-weight:bold;">Tổng</div>
<div class="t" style="left:308.44px;top:500.18px;font-size:7.7px;color:#3a3f45;font-weight:bold;">0,00</div>
<div class="t" style="left:974.50px;top:500.68px;font-size:7.7px;color:#3a3f45;font-weight:bold;transform:scaleX(1.0965);">40.060,00</div>
</div>
<div class="a" style="left:155px;top:513px;width:850px;height:8px;background:#f9f9f9"></div>
<svg style="left:156.5px;top:514.5px" width="5" height="5" viewBox="0 0 5 5"><path d="M4 0.5V4.5L1 2.5Z" fill="#7a7a7a"/></svg>
<div class="a" style="left:164.7px;top:514.2px;width:216px;height:5px;background:#8c8c8c;border-radius:2.1px"></div>
<div class="a" style="left:155px;top:521px;width:858px;height:1px;background:#e1e6ea"></div>
<div class="a" style="left:1005px;top:513px;width:8px;height:8px;background:#f9f9f9"></div>
<div class="a" style="left:1006.3px;top:412px;width:4.4px;height:86px;background:#8c8c8c;border-radius:2.2px"></div>
<svg style="left:1006.5px;top:506px" width="5" height="5" viewBox="0 0 5 5"><path d="M0.3 1H4.7L2.5 4Z" fill="#7a7a7a"/></svg>
<svg style="left:999px;top:514px" width="5" height="5" viewBox="0 0 5 5"><path d="M1 0.3V4.7L4 2.5Z" fill="#7a7a7a"/></svg>
<div class="t" style="left:165.40px;top:531.40px;font-size:8.5px;color:#3a3f45;transform:scaleX(0.9736);">Tổng số:</div>
<div class="t" style="left:201.00px;top:531.40px;font-size:8.5px;color:#3a3f45;font-weight:bold;">4</div>
<div class="t" style="left:209.00px;top:531.40px;font-size:8.5px;color:#3a3f45;transform:scaleX(1.0399);">bản ghi</div>
<div class="a" style="left:805.5px;top:527px;width:115px;height:17px;border:1px solid #d9e2e6;background:#fff;box-sizing:border-box"></div>
<div class="t" style="left:812.70px;top:531.60px;font-size:8.5px;color:#3a3f45;transform:scaleX(1.0504);">20 bản ghi trên trang</div>
<svg style="left:908.5px;top:533.5px" width="6" height="4" viewBox="0 0 6 4"><path d="M0 0H6L3 3.3Z" fill="#555a60"/></svg>
<div class="t" style="left:936.00px;top:531.60px;font-size:8.5px;color:#a0a5ab;transform:scaleX(0.9775);">Trước</div>
<div class="a" style="left:965.8px;top:527.6px;width:14.8px;height:15.4px;border:1px solid #d9e2e6;background:#fff;box-sizing:border-box"></div>
<div class="t" style="left:970.84px;top:531.60px;font-size:8.5px;color:#222;font-weight:bold;">1</div>
<div class="t" style="left:987.80px;top:531.60px;font-size:8.5px;color:#a0a5ab;transform:scaleX(0.9918);">Sau</div>
<div class="a" style="left:1015.2px;top:296.3px;width:6px;height:20px;background:#1e78e6;border-radius:3px 0 0 3px"></div>
<svg style="left:1016.5px;top:302.5px" width="4" height="7" viewBox="0 0 4 7"><path d="M.8 .8L3 3.5 .8 6.2" stroke="#fff" stroke-width="1" fill="none"/></svg>
<div class="a" style="left:989.4px;top:316.4px;width:31.6px;height:100.4px;background:#fff;border-radius:8px 0 0 8px;box-shadow:0 0 4px rgba(0,0,0,.12)"></div>
<svg style="left:995px;top:321.5px" width="25" height="25" viewBox="0 0 25 25"><defs><linearGradient id="gg" x1="0" y1="0" x2="0" y2="1"><stop offset="0" stop-color="#19cf7c"/><stop offset="1" stop-color="#14a765"/></linearGradient></defs><circle cx="12.5" cy="12.5" r="12.5" fill="url(#gg)"/><ellipse cx="12.6" cy="12.6" rx="8.4" ry="7.3" fill="#fff"/><circle cx="12.2" cy="12.6" r="4.6" fill="#17b870"/><path d="M15 15.5 L17.6 17 L14.2 17Z" fill="#17b870"/><circle cx="10.9" cy="12.6" r="0.95" fill="#fff"/><circle cx="13.9" cy="12.6" r="0.95" fill="#fff"/></svg>
<svg style="left:995px;top:353.4px" width="25" height="25" viewBox="0 0 25 25"><defs><linearGradient id="rg" x1="0" y1="0" x2="0" y2="1"><stop offset="0" stop-color="#ff6b45"/><stop offset="1" stop-color="#ea4330"/></linearGradient></defs><circle cx="12.5" cy="12.5" r="12.5" fill="url(#rg)"/><path d="M11.5 6.5 Q12 11.5 17 12.5 Q12 13.5 11.5 18.5 Q11 13.5 6 12.5 Q11 11.5 11.5 6.5Z" fill="#fff"/><circle cx="17" cy="7.5" r="1.3" fill="#fff"/></svg>
<svg style="left:995px;top:385.5px" width="25" height="25" viewBox="0 0 25 25"><defs><linearGradient id="bg2" x1="0" y1="0" x2="0" y2="1"><stop offset="0" stop-color="#5583f8"/><stop offset="1" stop-color="#2f55e6"/></linearGradient></defs><circle cx="12.5" cy="12.5" r="12.5" fill="url(#bg2)"/><path d="M12.5 5.5 A7 7 0 1 1 8 18.2 L5.5 19.5 L6.5 16.5 A7 7 0 0 1 12.5 5.5Z" fill="#fff"/><circle cx="9.5" cy="12.5" r="1" fill="#3b6fe8"/><circle cx="12.5" cy="12.5" r="1" fill="#3b6fe8"/><circle cx="15.5" cy="12.5" r="1" fill="#3b6fe8"/></svg>
<div class="a" style="left:2px;top:2px;width:1px;height:552px;background:rgba(50,138,159,0.55)"></div>
<div class="a" style="left:2px;top:2px;width:1019px;height:1px;background:rgba(50,138,159,0.45)"></div>
<div class="a" style="left:1021px;top:2px;width:1px;height:552px;background:rgba(240,240,240,0.5)"></div>
<div class="a" style="left:2px;top:553px;width:1019px;height:1px;background:rgba(50,138,159,0.35)"></div>
</body></html>
